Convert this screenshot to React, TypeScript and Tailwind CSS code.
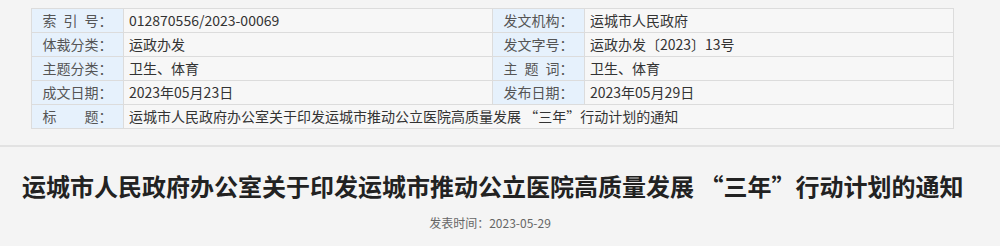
import React from "react";

const rows: [string, string, string, string][] = [
  ["索\u2002引\u2002号：", "012870556/2023-00069", "发文机构：", "运城市人民政府"],
  ["体裁分类：", "运政办发", "发文字号：", "运政办发〔2023〕13号"],
  ["主题分类：", "卫生、体育", "主\u2002题\u2002词：", "卫生、体育"],
  ["成文日期：", "2023年05月23日", "发布日期：", "2023年05月29日"],
];

const font = { fontFamily: '"Noto Sans CJK SC", "Noto Sans", sans-serif' };

export default function App() {
  return (
    <div className="w-[1000px] h-[246px] bg-[#f4f4f4] overflow-hidden" style={font}>
      <div className="pt-[8px] pl-[31px]">
        <table className="border-collapse w-[922px] table-fixed text-[14px] leading-[23px]">
          <colgroup>
            <col className="w-[92px]" />
            <col className="w-[369px]" />
            <col className="w-[92px]" />
            <col className="w-[369px]" />
          </colgroup>
          <tbody>
            {rows.map((r, i) => (
              <tr key={i} className="h-[24px]">
                <td className="border border-[#dcdcdc] bg-[#e6f1fc] text-[#555] text-center whitespace-pre p-0">{r[0]}</td>
                <td className="border border-[#dcdcdc] bg-[#f7f7f7] text-[#333] pl-[5px] p-0">{r[1]}</td>
                <td className="border border-[#dcdcdc] bg-[#e6f1fc] text-[#555] text-center whitespace-pre p-0">{r[2]}</td>
                <td className="border border-[#dcdcdc] bg-[#f7f7f7] text-[#333] pl-[5px] p-0">{r[3]}</td>
              </tr>
            ))}
            <tr className="h-[24px]">
              <td className="border border-[#dcdcdc] bg-[#e6f1fc] text-[#555] text-center whitespace-pre p-0">{"标　　题："}</td>
              <td colSpan={3} className="border border-[#dcdcdc] bg-[#f7f7f7] text-[#333] pl-[5px] p-0">
                运城市人民政府办公室关于印发运城市推动公立医院高质量发展 “三年”行动计划的通知
              </td>
            </tr>
          </tbody>
        </table>
      </div>
      <div className="mt-[16px] h-[2px] bg-[#e2e2e2]" />
      <h1 className="mt-[24px] pl-[22px] text-[24px] leading-[30px] font-bold text-[#222] whitespace-nowrap">
        运城市人民政府办公室关于印发运城市推动公立医院高质量发展 “三年”行动计划的通知
      </h1>
      <div className="mt-[14px] text-center text-[12px] leading-[16px] text-[#666] pr-[20px]">发表时间：2023-05-29</div>
    </div>
  );
}
